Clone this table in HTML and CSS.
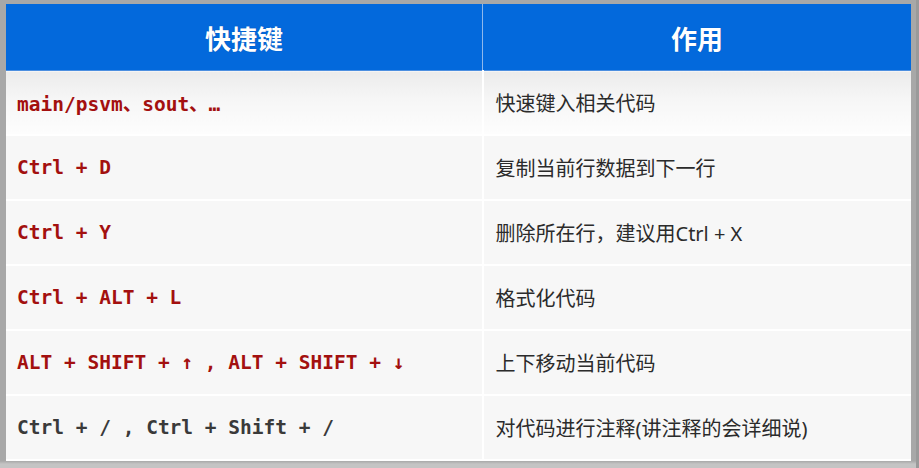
FILE: index.html
```html
<!DOCTYPE html>
<html lang="zh-CN">
<head>
<meta charset="utf-8">
<title>快捷键</title>
<link rel="stylesheet" href="styles.css">
</head>
<body>
<div class="screen">
  <div class="frame">
    <table class="keys">
      <thead>
        <tr>
          <th class="col-key">快捷键</th>
          <th class="col-use">作用</th>
        </tr>
      </thead>
      <tbody>
        <tr class="first">
          <td class="key">main/psvm、sout、…</td>
          <td class="use">快速键入相关代码</td>
        </tr>
        <tr>
          <td class="key">Ctrl + D</td>
          <td class="use">复制当前行数据到下一行</td>
        </tr>
        <tr>
          <td class="key">Ctrl + Y</td>
          <td class="use">删除所在行，建议用Ctrl + X</td>
        </tr>
        <tr>
          <td class="key">Ctrl + ALT + L</td>
          <td class="use">格式化代码</td>
        </tr>
        <tr>
          <td class="key">ALT + SHIFT + ↑ , ALT + SHIFT + ↓</td>
          <td class="use">上下移动当前代码</td>
        </tr>
        <tr>
          <td class="key dark">Ctrl + / , Ctrl + Shift + /</td>
          <td class="use">对代码进行注释(讲注释的会详细说)</td>
        </tr>
      </tbody>
    </table>
  </div>
  <div class="edge"></div>
</div>
</body>
</html>
```
FILE: styles.css
```css
html, body {
  margin: 0;
  padding: 0;
}
body {
  width: 919px;
  height: 468px;
  overflow: hidden;
  background: #a9a9a9;
}
.screen {
  display: flex;
  height: 468px;
}
.frame {
  padding: 4px 0 0 6px;
  width: 910px;
  height: 464px;
  background: linear-gradient(to bottom, #a8a8a8 0, #a8a8a8 461px, #c4c4c4 464px);
}
.edge {
  flex: 1;
  background: linear-gradient(to right, #9a9a9a 0, #9a9a9a 4px, #9ab6dc 5px, #b8cde8 100%);
}
.keys {
  width: 905px;
  border-collapse: collapse;
  table-layout: fixed;
  background: #ffffff;
}
.keys th {
  height: 66px;
  padding: 0;
  background: #0369dc;
  color: #ffffff;
  font-family: "Noto Sans CJK SC", "Noto Sans", sans-serif;
  font-size: 26px;
  font-weight: 700;
  text-align: center;
  text-shadow: 0 0 1px rgba(0, 30, 90, 0.4);
  border-bottom: 1px solid #4c8fe0;
}
.keys th.col-key {
  width: 476px;
  border-right: 1px solid #8fb8ec;
}
.keys td {
  height: 63px;
  padding: 0;
  background: #f7f7f7;
  border: 2px solid #ffffff;
  border-left: 0;
}
.keys tr.first td {
  background: linear-gradient(to bottom, #ebebeb 0, #f6f6f6 45%, #fdfdfd 100%);
  border-top: 0;
}
.keys td.key {
  padding-left: 11px;
  font-family: "DejaVu Sans Mono", "Liberation Mono", "Noto Sans CJK SC", monospace;
  font-size: 19.5px;
  font-weight: 700;
  color: #a3100f;
  white-space: nowrap;
}
.keys td.key.dark {
  color: #3a3a3a;
}
.keys td.use {
  padding-left: 12px;
  font-family: "Noto Sans", "Noto Sans CJK SC", sans-serif;
  font-size: 20px;
  color: #2b2b2b;
  white-space: nowrap;
  border-right: 0;
}
```
